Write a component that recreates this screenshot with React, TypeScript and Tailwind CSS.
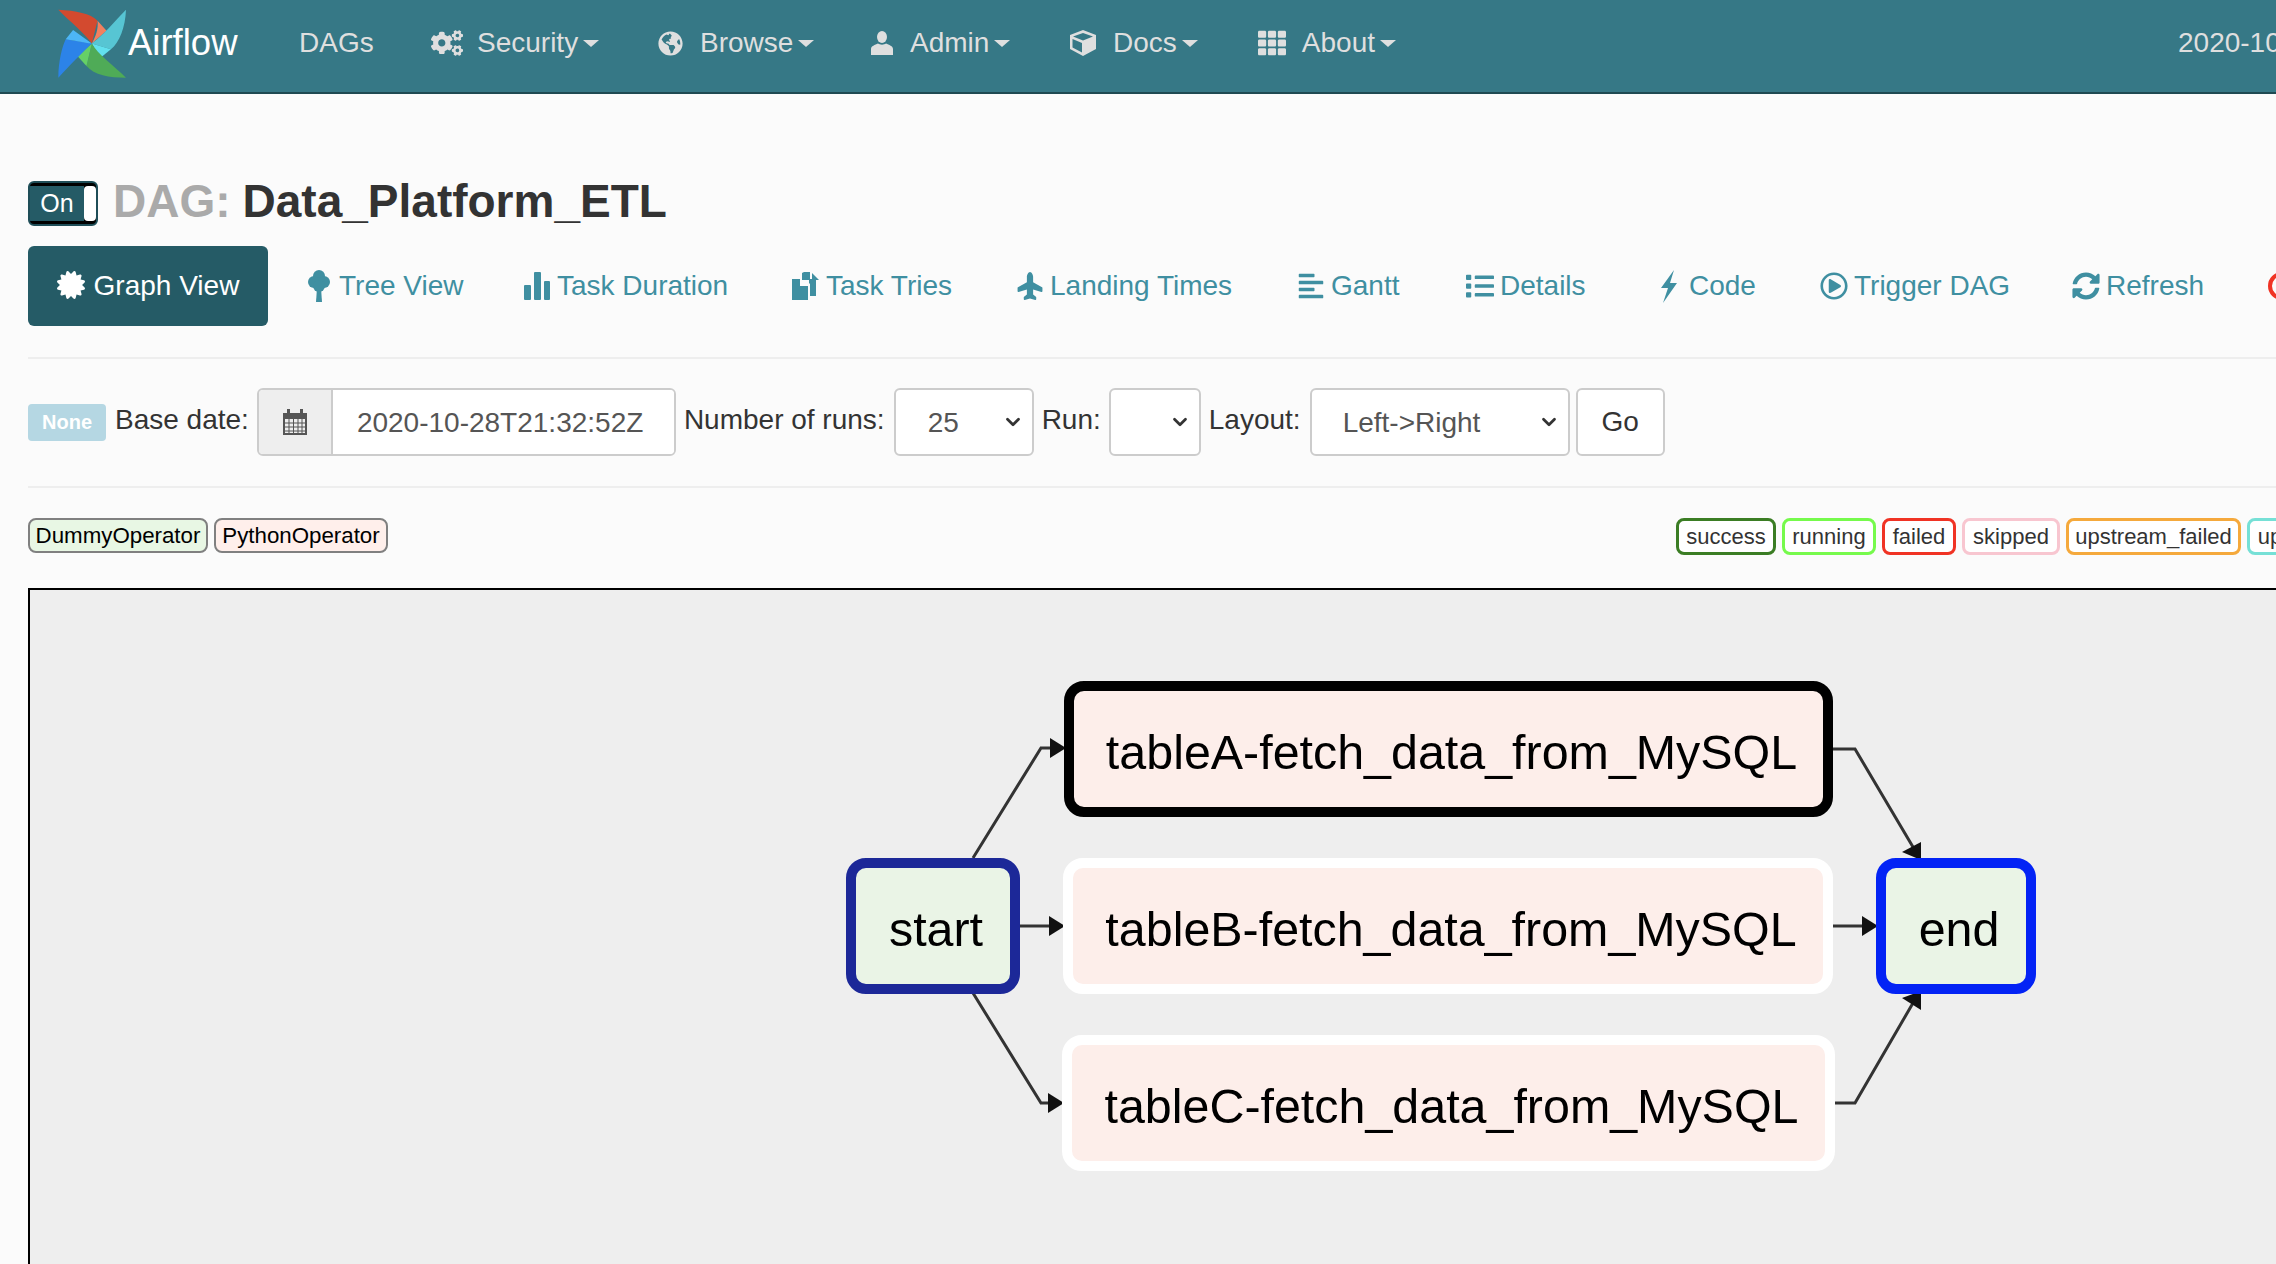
import { FaCertificate, FaCogs, FaGlobeAmericas, FaList, FaAlignLeft, FaPlane, FaRegPlayCircle, FaSyncAlt, FaTh } from "react-icons/fa";
import { ChevronDown } from "lucide-react";
import type { ReactNode } from "react";

function AirflowLogo() {
    return (
        <svg viewBox="84 22 212 212" className="w-[71px] h-[71px] shrink-0">
            <path d="M88 27C140 30 185 38 205 60L188 128C170 100 120 60 88 27Z" fill="#d34a2f" />
            <path d="M205 60L232 90L188 128C200 105 208 85 205 60Z" fill="#f3805f" />
            <path d="M290 27C288 80 270 125 245 145L188 128C220 105 258 60 290 27Z" fill="#57c5d3" />
            <path d="M188 128L245 145L212 172Z" fill="#62e0ee" />
            <path d="M290 230C240 230 195 222 172 195L188 128C205 160 255 195 290 230Z" fill="#4fab57" />
            <path d="M145 165L188 128L172 195Z" fill="#66d066" />
            <path d="M88 230C88 180 100 135 110 115L188 128C160 155 120 195 88 230Z" fill="#2c83e8" />
            <path d="M132 88L188 128C165 125 130 118 110 115Z" fill="#4db6f7" />
        </svg>
    );
}

function Caret() {
    return <span className="ml-[5px] w-0 h-0 border-x-[8px] border-x-transparent border-t-[7px] border-t-[#dfdfdf]" />;
}

function NavItem({ icon, label, className, iconClass = "w-[32px]" }: { icon: ReactNode; label: string; className: string; iconClass?: string }) {
    return (
        <div className={`flex items-center shrink-0 ${className}`}>
            <span className={`flex justify-center mr-[14px] ${iconClass}`}>{icon}</span>
            <span>{label}</span>
            <Caret />
        </div>
    );
}

function UserIcon() {
    return (
        <svg viewBox="0 0 22 24" className="w-[22px] h-[24px]" fill="#dfdfdf">
            <ellipse cx="11" cy="6" rx="5" ry="6" />
            <path d="M0 24V18C0 15 4 14 7 12.5C9 14 13 14 15 12.5C18 14 22 15 22 18V24Z" />
        </svg>
    );
}

function CubeIcon() {
    return (
        <svg viewBox="0 0 28 26" className="w-[28px] h-[26px]" fill="#dfdfdf">
            <path d="M14 0L27 5V19L14 26L1 19V5ZM4 6.5L14 10.5L24 6.5L14 3ZM13 13L3.500 9V17.500L13 22.500Z" fillRule="evenodd" />
        </svg>
    );
}

function TreeIcon() {
    return (
        <svg viewBox="0 0 22 32" className="w-[22px] h-[32px]" fill="#3f8fa1">
            <circle cx="11" cy="6" r="6" />
            <circle cx="6" cy="12" r="6" />
            <circle cx="16" cy="12" r="6" />
            <circle cx="11" cy="16" r="6" />
            <path d="M9 18H13L14 32H8Z" />
        </svg>
    );
}

function StatsIcon() {
    return (
        <svg viewBox="0 0 26 28" className="w-[26px] h-[28px]" fill="#3f8fa1">
            <rect x="0" y="13" width="7" height="15" rx="1" />
            <rect x="10" y="0" width="7" height="28" rx="1" />
            <rect x="20" y="9" width="6" height="19" rx="1" />
        </svg>
    );
}

function DuplicateIcon() {
    return (
        <svg viewBox="0 0 28 28" className="w-[28px] h-[28px]" fill="#3f8fa1">
            <path d="M0 7H8V14H16V28H0Z" />
            <path d="M12 0H18V8H10V1ZM17 7H24V24H18V12L17 11Z" />
            <path d="M20 1L27 8H20Z" />
        </svg>
    );
}

function BoltIcon() {
    return (
        <svg viewBox="0 0 18 33" className="w-[18px] h-[33px]" fill="#3f8fa1">
            <path d="M14 0L1 18H8L3 33L17 13H10L14 0Z" />
        </svg>
    );
}

function CalendarIcon() {
    return (
        <svg viewBox="0 0 26 28" className="w-[26px] h-[28px]" fill="#555">
            <path d="M1 5H5V1H8V5H18V1H21V5H25V27H1ZM3 11V25H23V11Z" fillRule="evenodd" />
            <path d="M7 11V25M11.500 11V25M16 11V25M20 11V25M3 15H23M3 19H23M3 23H23" stroke="#555" strokeWidth="1" fill="none" />
        </svg>
    );
}

const tabs = [
    { label: "Tree View", icon: <TreeIcon />, className: "w-[218px]" },
    { label: "Task Duration", icon: <StatsIcon />, className: "w-[269px]" },
    { label: "Task Tries", icon: <DuplicateIcon />, className: "w-[224px]" },
    { label: "Landing Times", icon: <FaPlane className="-rotate-90" size={30} />, className: "w-[281px]" },
    { label: "Gantt", icon: <FaAlignLeft size={28} />, className: "w-[169px]" },
    { label: "Details", icon: <FaList size={28} />, className: "w-[189px]" },
    { label: "Code", icon: <BoltIcon />, className: "w-[165px]" },
    { label: "Trigger DAG", icon: <FaRegPlayCircle size={28} />, className: "w-[252px]" },
    { label: "Refresh", icon: <FaSyncAlt size={28} />, className: "w-[196px]" },
];

const legend = [
    { label: "success", className: "border-[#3b7d24] w-[100px]" },
    { label: "running", className: "border-[#76fa4c] w-[94px]" },
    { label: "failed", className: "border-[#f03324] w-[74px]" },
    { label: "skipped", className: "border-[#f8c6d0] w-[98px]" },
    { label: "upstream_failed", className: "border-[#f5a93c] w-[175px]" },
    { label: "up_for_retry", className: "border-[#76e0d6] w-[140px]" },
];

function Select({ value, className }: { value: string; className: string }) {
    return (
        <div className={`h-[68px] shrink-0 flex items-center justify-between bg-white border-2 border-[#ccc] rounded-md text-[#555] ${className}`}>
            <span className="pt-[2px]">{value}</span>
            <ChevronDown size={22} strokeWidth={3} className="text-[#333]" />
        </div>
    );
}

function GraphNode({ label, className }: { label: string; className: string }) {
    return (
        <div className={`absolute h-[136px] flex items-center justify-center rounded-[20px] border-[10px] pl-[6px] pt-[6px] text-[48.4px] text-black whitespace-nowrap ${className}`}>
            {label}
        </div>
    );
}

export default function App() {
    return (
        <div className="w-full h-screen overflow-hidden bg-[#fbfbfb] font-['Liberation_Sans',Arial,sans-serif] text-[28px] text-[#333]">
            <div className="w-[2500px]">
                {/* Navbar */}
                <nav className="h-[94px] bg-[#367886] border-b-2 border-[#1f4a52] flex items-center pb-[6px] text-[#dfdfdf]">
                    <div className="ml-[57px] flex items-center w-[242px] shrink-0">
                        <AirflowLogo />
                        <span className="text-white text-[36.5px]">Airflow</span>
                    </div>
                    <span className="w-[132px] shrink-0">DAGs</span>
                    <NavItem icon={<FaCogs size={32} />} label="Security" className="w-[223px]" />
                    <NavItem icon={<FaGlobeAmericas size={25} />} label="Browse" className="w-[214px]" />
                    <NavItem icon={<UserIcon />} label="Admin" className="w-[199px]" iconClass="w-[28px]" />
                    <NavItem icon={<CubeIcon />} label="Docs" className="w-[189px]" />
                    <NavItem icon={<FaTh size={28} />} label="About" className="w-[140px]" />
                    <span className="ml-[782px] shrink-0">2020-10-28 21:32:52 UTC</span>
                </nav>

                <main className="pl-[28px]">
                    {/* Title */}
                    <div className="mt-[87px] h-[45px] flex items-center">
                        <div className="w-[70px] h-[45px] flex rounded-md border-2 border-[#1f4e58] bg-black overflow-hidden py-[3px]">
                            <span className="flex-1 bg-[#255b66] text-white text-[25px] flex items-center justify-center">On</span>
                            <span className="w-[12px] bg-white rounded-sm" />
                        </div>
                        <h1 className="ml-[15px] -mt-[6px] text-[46px] font-bold flex items-center leading-none">
                            <span className="text-[#aaa]">DAG:</span>
                            <span className="ml-[12px] text-[#333]">Data_Platform_ETL</span>
                        </h1>
                    </div>

                    {/* Tabs */}
                    <div className="mt-[20px] h-[80px] flex items-center text-[#3f8fa1]">
                        <div className="w-[240px] h-[80px] mr-[37px] shrink-0 flex items-center justify-center bg-[#255b66] rounded-md text-white">
                            <FaCertificate size={28} className="mr-[9px] -mt-[2px]" />
                            <span>Graph View</span>
                        </div>
                        {tabs.map((tab) => (
                            <div key={tab.label} className={`flex items-center gap-[6px] shrink-0 whitespace-nowrap ${tab.className}`}>
                                <span className="flex justify-center w-[28px]">{tab.icon}</span>
                                <span>{tab.label}</span>
                            </div>
                        ))}
                        <span className="w-[28px] h-[28px] rounded-full border-[4px] border-[#f03324] shrink-0" />
                    </div>
                    <hr className="mt-[31px] border-t-2 border-[#eee]" />

                    {/* Filters */}
                    <div className="mt-[29px] h-[68px] flex items-center">
                        <span className="w-[78px] h-[37px] flex items-center justify-center bg-[#b5d7e3] rounded text-white text-[20px] font-bold mr-[9px] shrink-0">None</span>
                        <span className="mr-[8px] -mt-[4px]">Base date:</span>
                        <div className="w-[419px] h-[68px] flex shrink-0 border-2 border-[#ccc] rounded-md overflow-hidden">
                            <div className="w-[74px] bg-[#eee] border-r-2 border-[#ccc] flex items-center justify-center">
                                <CalendarIcon />
                            </div>
                            <div className="flex-1 bg-white flex items-center pl-[24px] pt-[2px] text-[#555]">2020-10-28T21:32:52Z</div>
                        </div>
                        <span className="ml-[8px] mr-[9px] -mt-[4px]">Number of runs:</span>
                        <Select value="25" className="w-[140px] pl-[32px] pr-[8px]" />
                        <span className="ml-[8px] mr-[8px] -mt-[4px]">Run:</span>
                        <Select value="" className="w-[92px] pr-[8px]" />
                        <span className="ml-[8px] mr-[9px] -mt-[4px]">Layout:</span>
                        <Select value="Left->Right" className="w-[260px] pl-[31px] pr-[8px]" />
                        <div className="ml-[6px] w-[89px] h-[68px] flex items-center justify-center bg-white border-2 border-[#ccc] rounded-md shrink-0">Go</div>
                    </div>
                    <hr className="mt-[30px] border-t-2 border-[#eee]" />

                    {/* Operators and states */}
                    <div className="mt-[29px] h-[37px] flex items-center">
                        <span className="w-[180px] h-[35px] flex items-center justify-center bg-[#e8f7e4] border-2 border-[#808080] rounded-lg text-[22.3px] text-black shrink-0">DummyOperator</span>
                        <span className="ml-[6px] w-[174px] h-[35px] flex items-center justify-center bg-[#ffefeb] border-2 border-[#808080] rounded-lg text-[22.3px] text-black shrink-0">PythonOperator</span>
                        <div className="ml-[1288px] mt-[2px] flex gap-[6px] shrink-0">
                            {legend.map((state) => (
                                <span key={state.label} className={`h-[37px] flex items-center justify-center bg-white border-[3.5px] rounded-lg text-[22px] shrink-0 ${state.className}`}>
                                    {state.label}
                                </span>
                            ))}
                        </div>
                    </div>

                    {/* Graph */}
                    <div className="relative mt-[34px] w-[2400px] h-[800px] bg-[#eee] border-2 border-black">
                        <svg className="absolute inset-0 w-full h-full">
                            <g fill="none" stroke="#333" strokeWidth="3">
                                <path d="M943 268L1011 158L1022 158" />
                                <path d="M990 336L1021 336" />
                                <path d="M943 403L1011 513L1020 513" />
                                <path d="M1803 159L1825 159L1883 257" />
                                <path d="M1803 336L1834 336" />
                                <path d="M1805 513L1825 513L1883 413" />
                            </g>
                            <g fill="#111">
                                <path d="M1020 148L1036 158L1020 168Z" />
                                <path d="M1019 326L1035 336L1019 346Z" />
                                <path d="M1018 503L1034 513L1018 523Z" />
                                <path d="M1891 252L1872 262L1891 270Z" />
                                <path d="M1832 326L1848 336L1832 346Z" />
                                <path d="M1891 420L1872 408L1891 401Z" />
                            </g>
                        </svg>
                        <GraphNode label="tableA-fetch_data_from_MySQL" className="left-[1034px] top-[91px] w-[769px] bg-[#fdeeea] border-black" />
                        <GraphNode label="start" className="left-[816px] top-[268px] w-[174px] bg-[#eaf4e6] border-[#1c2898]" />
                        <GraphNode label="tableB-fetch_data_from_MySQL" className="left-[1033px] top-[268px] w-[770px] bg-[#fdeeea] border-white" />
                        <GraphNode label="tableC-fetch_data_from_MySQL" className="left-[1032px] top-[445px] w-[773px] bg-[#fdeeea] border-white" />
                        <GraphNode label="end" className="left-[1846px] top-[268px] w-[160px] bg-[#eaf4e6] border-[#0323f5]" />
                    </div>
                </main>
            </div>
        </div>
    );
}
